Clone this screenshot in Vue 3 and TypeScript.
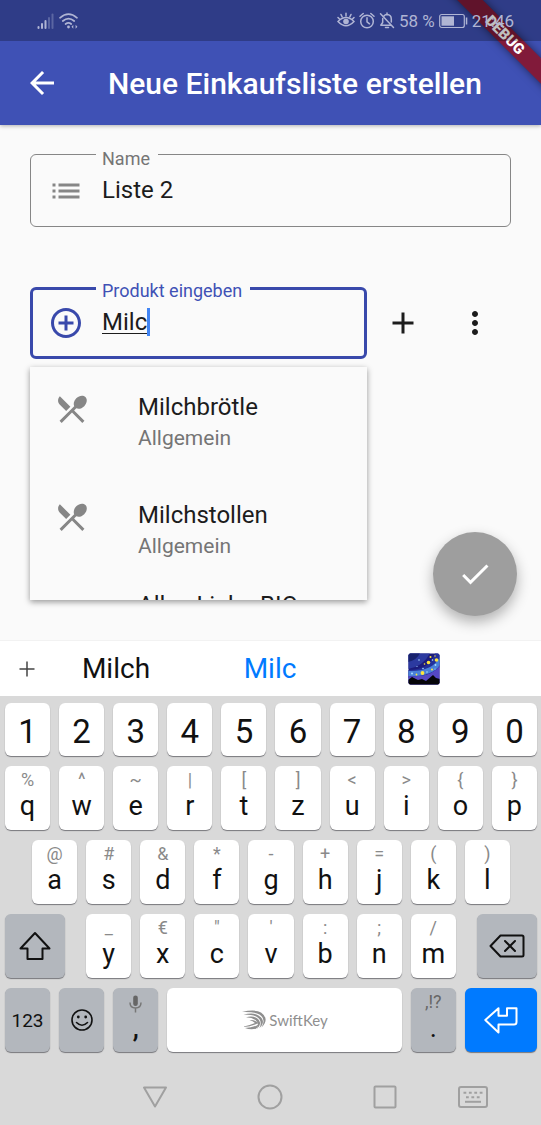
<script setup lang="ts">
import { ref } from 'vue'

interface Key {
  main: string
  hint?: string
}

interface Product {
  name: string
  category: string
  icon: boolean
}

const listName = ref('Liste 2')
const productName = ref('Milc')

const products: Product[] = [
  { name: 'Milchbrötle', category: 'Allgemein', icon: true },
  { name: 'Milchstollen', category: 'Allgemein', icon: true },
  { name: 'Alles Liebe BIO', category: '', icon: false },
]

const toKeys = (letters: string, hints: string): Key[] =>
  letters.split('').map((main, i) => ({ main, hint: hints[i] }))

const numbers = '1234567890'.split('')
const topRow = toKeys('qwertzuiop', '%^~|[]<>{}')
const homeRow = toKeys('asdfghjkl', '@#&*-+=()')
const bottomRow = toKeys('yxcvbnm', '_€"\':;/')
</script>

<template>
  <div class="screen">
    <header class="header">
      <div class="status">
        <div class="status-group">
          <svg width="18" height="18" viewBox="0 0 18 18" fill="currentColor">
            <rect x="0.5" y="14" width="2" height="3" rx="1" />
            <rect x="4" y="11" width="2" height="6" rx="1" />
            <rect x="7.5" y="8" width="2" height="9" rx="1" />
            <rect x="11" y="5" width="2" height="12" rx="1" opacity=".35" />
            <rect x="14.5" y="1.5" width="2" height="15.5" rx="1" opacity=".35" />
          </svg>
          <svg width="20" height="18" viewBox="0 0 20 18" fill="none" stroke="currentColor" stroke-width="1.7" stroke-linecap="round">
            <path d="M1 5.8Q9.500-1.500 18 5.800M3.800 9Q9.500 4.200 15.200 9M6.600 12Q9.500 9.800 12.200 12" />
            <circle cx="9.5" cy="15" r="1.4" fill="currentColor" stroke="none" />
            <path d="M14.300 12.800L12.500 14.800L14.300 16.800ZM16.600 12.800L18.400 14.800L16.600 16.800Z" fill="currentColor" stroke="none" />
          </svg>
        </div>
        <div class="status-group">
          <svg width="18" height="17" viewBox="0 0 18 17" fill="none" stroke="currentColor" stroke-width="1.5" stroke-linecap="round">
            <path d="M1 9.500Q9 1.500 17 9.500Q9 18 1 9.500Z" />
            <circle cx="9" cy="9.5" r="2.8" fill="currentColor" stroke="none" />
            <path d="M9 1.200V4M4 2.500L5.200 5M14 2.500L12.800 5M1 5.500L2.500 7M17 5.500L15.500 7" />
          </svg>
          <svg width="16" height="17" viewBox="0 0 16 17" fill="none" stroke="currentColor" stroke-width="1.5" stroke-linecap="round">
            <circle cx="8" cy="9.5" r="6.3" />
            <path d="M8 5.800V9.800L10.500 11.800M1 4.300L4.200 1.500M15 4.300L11.800 1.500" />
          </svg>
          <svg width="16" height="17" viewBox="0 0 16 17" fill="none" stroke="currentColor" stroke-width="1.5" stroke-linecap="round" stroke-linejoin="round">
            <path d="M4.800 4.200Q6 2.500 8 2.500Q12.300 2.800 12.300 7V10M3.700 6.500V10.500L1.800 13.200H12M1.500 1.800L14.500 15.500M6.500 15.600H9.500M8 1V2.500" />
          </svg>
          <span>58 %</span>
          <svg width="29" height="16" viewBox="0 0 29 16">
            <rect x="0.7" y="1.5" width="24.6" height="13" rx="2" fill="none" stroke="currentColor" stroke-width="1.2" />
            <rect x="2.5" y="3.3" width="12.5" height="9.4" fill="currentColor" />
            <rect x="26.8" y="4.5" width="1.5" height="7" fill="currentColor" />
          </svg>
          <span>21:46</span>
        </div>
      </div>
      <div class="appbar">
        <button class="icon-button back" type="button" aria-label="Zurück">
          <svg width="36" height="36" viewBox="0 0 24 24" fill="currentColor">
            <path d="M20 11H7.830l5.590-5.590L12 4l-8 8 8 8 1.410-1.410L7.830 13H20v-2z" />
          </svg>
        </button>
        <h1>Neue Einkaufsliste erstellen</h1>
      </div>
      <div class="banner">DEBUG</div>
    </header>

    <main class="content">
      <div class="field">
        <label for="list-name">Name</label>
        <svg width="36" height="36" viewBox="0 0 24 24" fill="currentColor">
          <path d="M3 13h2v-2H3v2zm0 4h2v-2H3v2zm0-8h2V7H3v2zm4 4h14v-2H7v2zm0 4h14v-2H7v2zM7 7v2h14V7H7z" />
        </svg>
        <input id="list-name" v-model="listName" type="text" />
      </div>

      <div class="product-row">
        <div class="field active">
          <label for="product-name">Produkt eingeben</label>
          <svg width="36" height="36" viewBox="0 0 24 24" fill="currentColor">
            <path d="M13 7h-2v4H7v2h4v4h2v-4h4v-2h-4V7zm-1-5C6.480 2 2 6.480 2 12s4.480 10 10 10 10-4.480 10-10S17.520 2 12 2zm0 18c-4.410 0-8-3.590-8-8s3.590-8 8-8 8 3.590 8 8-3.590 8-8 8z" />
          </svg>
          <input id="product-name" v-model="productName" type="text" size="4" autocomplete="off" />
          <span class="caret"></span>
        </div>
        <button class="icon-button" type="button" aria-label="Hinzufügen">
          <svg width="36" height="36" viewBox="0 0 24 24" fill="currentColor">
            <path d="M19 13h-6v6h-2v-6H5v-2h6V5h2v6h6v2z" />
          </svg>
        </button>
        <button class="icon-button" type="button" aria-label="Mehr">
          <svg width="36" height="36" viewBox="0 0 24 24" fill="currentColor">
            <path d="M12 8c1.100 0 2-.9 2-2s-.9-2-2-2-2 .9-2 2 .9 2 2 2zm0 2c-1.100 0-2 .9-2 2s.9 2 2 2 2-.9 2-2-.9-2-2-2zm0 6c-1.100 0-2 .9-2 2s.9 2 2 2 2-.9 2-2-.9-2-2-2z" />
          </svg>
        </button>
      </div>

      <ul class="suggestions">
        <li v-for="p in products" :key="p.name" :class="{ partial: !p.icon }">
          <svg v-if="p.icon" width="36" height="36" viewBox="0 0 24 24" fill="currentColor">
            <path d="M8.100 13.340l2.830-2.830L3.910 3.500c-1.560 1.560-1.560 4.090 0 5.660l4.190 4.180zm6.780-1.810c1.530.71 3.680.21 5.270-1.380 1.910-1.910 2.280-4.650.81-6.120-1.460-1.460-4.200-1.100-6.120.81-1.590 1.590-2.090 3.740-1.380 5.270L3.700 19.870l1.410 1.410L12 14.410l6.880 6.880 1.410-1.410L13.410 13l1.470-1.470z" />
          </svg>
          <div class="product">
            <span class="product-name">{{ p.name }}</span>
            <span class="category">{{ p.category }}</span>
          </div>
        </li>
      </ul>

      <button class="fab" type="button" aria-label="Speichern">
        <svg width="36" height="36" viewBox="0 0 24 24" fill="currentColor">
          <path d="M9 16.170L4.830 12l-1.420 1.410L9 19 21 7l-1.410-1.410z" />
        </svg>
      </button>
    </main>

    <section class="keyboard">
      <div class="predictions">
        <button class="more" type="button" aria-label="Werkzeuge">
          <svg width="16" height="16" viewBox="0 0 16 16" stroke="#444" stroke-width="1.5">
            <path d="M8 0.500V15.500M0.500 8H15.500" />
          </svg>
        </button>
        <button type="button">Milch</button>
        <button class="chosen" type="button">Milc</button>
        <button type="button" aria-label="Milchstraße">
          <svg width="32" height="32" viewBox="0 0 32 32">
            <clipPath id="sky"><rect x="0.5" y="0.5" width="31" height="31" rx="2" /></clipPath>
            <g clip-path="url(#sky)">
              <rect width="32" height="32" fill="#1c1c7c" />
              <path d="M0 0H22Q16 13 0 16Z" fill="#2c3aa0" />
              <path d="M0 0H12Q9 7 0 9Z" fill="#18236e" />
              <path d="M0 17Q22 17 27 0H32V14Q24 26 0 25Z" fill="#23309a" />
              <path d="M0 18Q24 19 32 4V12Q24 24 0 23Z" fill="#4a80d8" />
              <path d="M0 23Q24 25 32 12V32H0Z" fill="#5548c4" />
              <path d="M0 27L4 24L10 27L14 26L18 28L25 22L28 25L32 26V32H0Z" fill="#050509" />
              <g fill="#ffe53b">
                <circle cx="20.5" cy="9.5" r="1.8" /><circle cx="28.5" cy="7" r="1.8" />
                <circle cx="14.5" cy="20" r="1.9" /><circle cx="22.5" cy="4" r="1" />
                <circle cx="16.5" cy="11" r=".8" /><circle cx="24" cy="16.5" r="1" />
                <circle cx="8.5" cy="21.5" r=".9" /><circle cx="27" cy="3" r=".7" />
              </g>
              <g fill="#a9dcff">
                <circle cx="11" cy="7" r=".8" /><circle cx="24.5" cy="7" r=".8" />
                <circle cx="15" cy="15.5" r=".8" /><circle cx="4" cy="20.5" r="1" />
                <circle cx="19" cy="19" r=".8" /><circle cx="27.5" cy="12" r=".9" />
                <circle cx="9" cy="13.5" r=".6" /><circle cx="27" cy="16" r=".6" />
              </g>
            </g>
          </svg>
        </button>
      </div>

      <div class="keys">
        <div class="row">
          <button v-for="n in numbers" :key="n" class="key number" type="button">{{ n }}</button>
        </div>
        <div class="row">
          <button v-for="k in topRow" :key="k.main" class="key" type="button">
            <span class="hint">{{ k.hint }}</span><span class="letter">{{ k.main }}</span>
          </button>
        </div>
        <div class="row home">
          <button v-for="k in homeRow" :key="k.main" class="key" type="button">
            <span class="hint">{{ k.hint }}</span><span class="letter">{{ k.main }}</span>
          </button>
        </div>
        <div class="row">
          <button class="key dark centered shift" type="button" aria-label="Umschalt">
            <svg width="32" height="30" viewBox="0 0 32 30" fill="none" stroke="#111" stroke-width="2" stroke-linejoin="round">
              <path d="M16 2L30.500 17.500H23.500V28H8.500V17.500H1.500Z" />
            </svg>
          </button>
          <button v-for="k in bottomRow" :key="k.main" class="key" type="button">
            <span class="hint">{{ k.hint }}</span><span class="letter">{{ k.main }}</span>
          </button>
          <button class="key dark centered backspace" type="button" aria-label="Löschen">
            <svg width="36" height="24" viewBox="0 0 36 24" fill="none" stroke="#111" stroke-width="2" stroke-linejoin="round" stroke-linecap="round">
              <path d="M1.500 12L11.500 1.500H33Q34.500 1.500 34.500 3V21Q34.500 22.500 33 22.500H11.500Z" />
              <path d="M16 7L26 17M26 7L16 17" />
            </svg>
          </button>
        </div>
        <div class="row">
          <button class="key dark centered mode" type="button">123</button>
          <button class="key dark centered" type="button" aria-label="Emoji">
            <svg width="24" height="24" viewBox="0 0 24 24" fill="none" stroke="#111" stroke-width="1.6" stroke-linecap="round">
              <circle cx="12" cy="12" r="10" />
              <path d="M6.500 14.500Q12 20 17.500 14.500" />
              <circle cx="8.3" cy="9" r="1.4" fill="#111" stroke="none" />
              <circle cx="15.7" cy="9" r="1.4" fill="#111" stroke="none" />
            </svg>
          </button>
          <button class="key dark" type="button" aria-label="Komma">
            <span class="hint mic">
              <svg width="13" height="18" viewBox="0 0 13 18">
                <rect x="4.2" y="0.5" width="4.6" height="10.5" rx="2.3" fill="#666" />
                <path d="M1 7.500Q1 13 6.500 13Q12 13 12 7.500M6.500 13V17.500" fill="none" stroke="#777" stroke-width="1.5" />
              </svg>
            </span>
            <span class="letter comma">,</span>
          </button>
          <button class="key centered space" type="button">
            <svg width="26" height="20" viewBox="0 0 26 20" fill="#8f8f8f">
              <path d="M1 2Q14-1 20 2.500Q29 9 20.500 17.500Q25.500 9 18.500 4.500Q13 1.500 1 2Z" />
              <path d="M2.500 4.500Q13 2 17.500 5.500Q26 11 18.300 18.300Q22 11 16 7Q12 4.500 2.500 4.500Z" />
              <path d="M5 7.200Q12 5.500 16 8.300Q22.500 12.500 15.800 19Q18.500 13 14.500 10Q11 7.500 5 7.200Z" />
              <path d="M8.500 10Q13.500 9.500 17.500 13Q10 17 1 17Q8.500 15.500 14 13Q12 10.800 8.500 10Z" />
              <path d="M17.500 14.500Q12 18 4 18Q9 20 15 18.800Q17 17 17.500 14.500Z" />
            </svg>
            <span>SwiftKey</span>
          </button>
          <button class="key dark" type="button">
            <span class="hint marks">,!?</span><span class="letter">.</span>
          </button>
          <button class="key centered enter" type="button" aria-label="Eingabe">
            <svg width="34" height="27" viewBox="0 0 34 27" fill="none" stroke="#fff" stroke-width="2" stroke-linejoin="round">
              <path d="M1.300 13L14.500 1.200V8.700H23V1.300H32.500V15Q32.500 17.500 30 17.500H14.500V25.500Z" />
            </svg>
          </button>
        </div>
      </div>

      <nav class="navigation">
        <button class="nav-back" type="button" aria-label="Zurück">
          <svg width="26" height="24" viewBox="0 0 26 24"><path d="M2 2.500H24L13 21.500Z" /></svg>
        </button>
        <button type="button" aria-label="Startseite">
          <svg width="26" height="26" viewBox="0 0 26 26"><circle cx="13" cy="13" r="11.5" /></svg>
        </button>
        <button type="button" aria-label="Übersicht">
          <svg width="24" height="24" viewBox="0 0 24 24"><rect x="1.5" y="1.5" width="21" height="21" rx="1" /></svg>
        </button>
        <button type="button" aria-label="Tastatur">
          <svg width="30" height="22" viewBox="0 0 30 22">
            <rect x="1" y="1" width="28" height="20" rx="2" />
            <path d="M5.500 6.800H24.500" stroke-dasharray="2.8 2.6" />
            <path d="M8 11.200H22" stroke-dasharray="2.8 2.6" />
            <path d="M7 15.800H23" />
          </svg>
        </button>
      </nav>
    </section>
  </div>
</template>

<style>
body {
  margin: 0;
  background: #fafafa;
}
</style>

<style scoped>
.screen {
  display: flex;
  flex-direction: column;
  min-height: 100vh;
  overflow: hidden;
  background: #fafafa;
  color: #1c1c1c;
  font-family: Roboto, "Liberation Sans", sans-serif;
}

button {
  display: flex;
  align-items: center;
  justify-content: center;
  margin: 0;
  padding: 0;
  border: 0;
  background: none;
  color: inherit;
  font: inherit;
}

svg {
  flex: none;
}

.header {
  position: relative;
  z-index: 1;
  overflow: hidden;
  background: #3f51b5;
  box-shadow: 0 1px 4px rgba(0, 0, 0, 0.3);
  color: #fff;
}

.status {
  position: relative;
  z-index: 2;
  display: flex;
  justify-content: space-between;
  align-items: center;
  height: 41px;
  padding: 0 27px 0 37px;
  background: rgba(0, 0, 0, 0.25);
  color: #b0b5d4;
  font-size: 17px;
}

.status-group {
  display: flex;
  align-items: center;
  gap: 4px;
}

.appbar {
  display: flex;
  align-items: center;
  height: 84px;
}

.back {
  width: 84px;
}

h1 {
  margin: 0 0 0 24px;
  padding-top: 2px;
  font-size: 30px;
  font-weight: 500;
  line-height: 36px;
  white-space: nowrap;
}

.banner {
  position: absolute;
  top: 26px;
  right: -64px;
  z-index: 1;
  width: 200px;
  background: rgba(160, 0, 0, 0.68);
  box-shadow: 0 0 8px rgba(0, 0, 0, 0.5);
  font-size: 15px;
  font-weight: 900;
  line-height: 18px;
  text-align: center;
  transform: rotate(45deg);
}

.content {
  position: relative;
  flex: 1;
  padding: 29px 30px 24px;
}

.field {
  position: relative;
  display: flex;
  align-items: center;
  box-sizing: border-box;
  height: 73px;
  padding-left: 17px;
  border: 1px solid #868686;
  border-radius: 6px;
  color: #868686;
}

.field label {
  position: absolute;
  top: -8px;
  left: 65px;
  padding: 0 8px 0 6px;
  background: #fafafa;
  color: #757575;
  font-size: 18px;
  line-height: 24px;
}

.field input {
  flex: 1;
  min-width: 0;
  margin: 0 0 0 18px;
  padding: 0 0 2px;
  border: 0;
  outline: 0;
  background: none;
  color: #1c1c1c;
  font: 24px/28px Roboto, "Liberation Sans", sans-serif;
}

.product-row {
  display: flex;
  align-items: center;
  margin-top: 60px;
}

.field.active {
  flex: 1;
  height: 72px;
  padding-left: 15px;
  border: 3px solid #3949ab;
  color: #3949ab;
}

.field.active label {
  top: -11px;
  left: 63px;
  color: #3f51b5;
}

.field.active input {
  flex: none;
  field-sizing: content;
  text-decoration: underline;
  text-decoration-thickness: 1px;
  text-underline-offset: 3px;
}

.caret {
  width: 3px;
  height: 28px;
  margin-bottom: 2px;
  background: #4285f4;
}

.icon-button {
  height: 72px;
}

.product-row .icon-button {
  width: 72px;
}

.suggestions {
  box-sizing: border-box;
  height: 233px;
  margin: 8px 144px 0 0;
  padding: 0;
  overflow: hidden;
  background: #fafafa;
  box-shadow: 0 2px 6px rgba(0, 0, 0, 0.4);
  list-style: none;
}

.suggestions li {
  display: flex;
  gap: 48px;
  box-sizing: border-box;
  height: 108px;
  padding: 24px;
  color: #868686;
}

.suggestions li.partial {
  padding: 6px 24px 0 108px;
}

.product {
  display: flex;
  flex-direction: column;
  gap: 2px;
  padding-top: 1px;
}

.product-name {
  color: #1c1c1c;
  font-size: 24px;
  line-height: 30px;
}

.category {
  color: #757575;
  font-size: 21px;
  line-height: 28px;
}

.fab {
  position: absolute;
  right: 24px;
  bottom: 24px;
  width: 84px;
  height: 84px;
  border-radius: 50%;
  background: #9e9e9e;
  box-shadow: 0 6px 14px rgba(0, 0, 0, 0.3);
  color: #fff;
}

.keyboard {
  background: #d9d9d9;
  color: #111;
}

.predictions {
  display: grid;
  grid-template-columns: minmax(0, 39fr) repeat(3, minmax(0, 154fr)) minmax(0, 40fr);
  box-sizing: border-box;
  height: 56px;
  border-top: 1px solid #f2f2f2;
  background: #fff;
  font-size: 28px;
}

.more {
  width: 54px;
}

.chosen {
  color: #007aff;
}

.keys {
  display: flex;
  flex-direction: column;
  gap: 10px;
  padding: 7px 4px 0 5px;
}

.row {
  display: grid;
  grid-template-columns: repeat(20, minmax(0, 1fr));
  column-gap: 9px;
}

.key {
  grid-column: span 2;
  flex-direction: column;
  justify-content: flex-start;
  box-sizing: border-box;
  height: 64px;
  padding-top: 4px;
  border-radius: 6px;
  background: #fff;
  box-shadow: 0 1px 1px #77777c;
}

.key.number {
  justify-content: center;
  height: 53px;
  font-size: 33px;
  line-height: 38px;
}

.key.centered {
  flex-direction: row;
  justify-content: center;
  padding-top: 0;
}

.key.dark {
  background: #b3b7bd;
}

.hint {
  height: 20px;
  color: #8a8a8a;
  font-size: 18px;
  line-height: 20px;
}

.hint.mic {
  padding-top: 3px;
  height: 17px;
}

.hint.marks {
  color: #666;
}

.letter {
  font-size: 27px;
  line-height: 32px;
}

.letter.comma {
  font-weight: 500;
}

.home .key:first-child {
  grid-column: 2 / span 2;
}

.key.shift {
  grid-column: span 3;
  margin-right: 12px;
}

.key.backspace {
  grid-column: span 3;
  margin-left: 12px;
}

.key.mode {
  font-size: 19px;
}

.key.space {
  grid-column: span 9;
  gap: 2px;
  color: #8f8f8f;
  font-family: Lato, Roboto, sans-serif;
  font-size: 15px;
}

.key.enter {
  grid-column: span 3;
  background: #007aff;
}

.navigation {
  display: grid;
  grid-template-columns: 97fr 115fr 115fr 115fr 62fr 37fr;
  height: 57px;
  padding-top: 16px;
}

.nav-back {
  grid-column: 2;
}

.navigation svg {
  fill: none;
  stroke: #a0a0a0;
  stroke-width: 2;
  stroke-linejoin: round;
}
</style>
